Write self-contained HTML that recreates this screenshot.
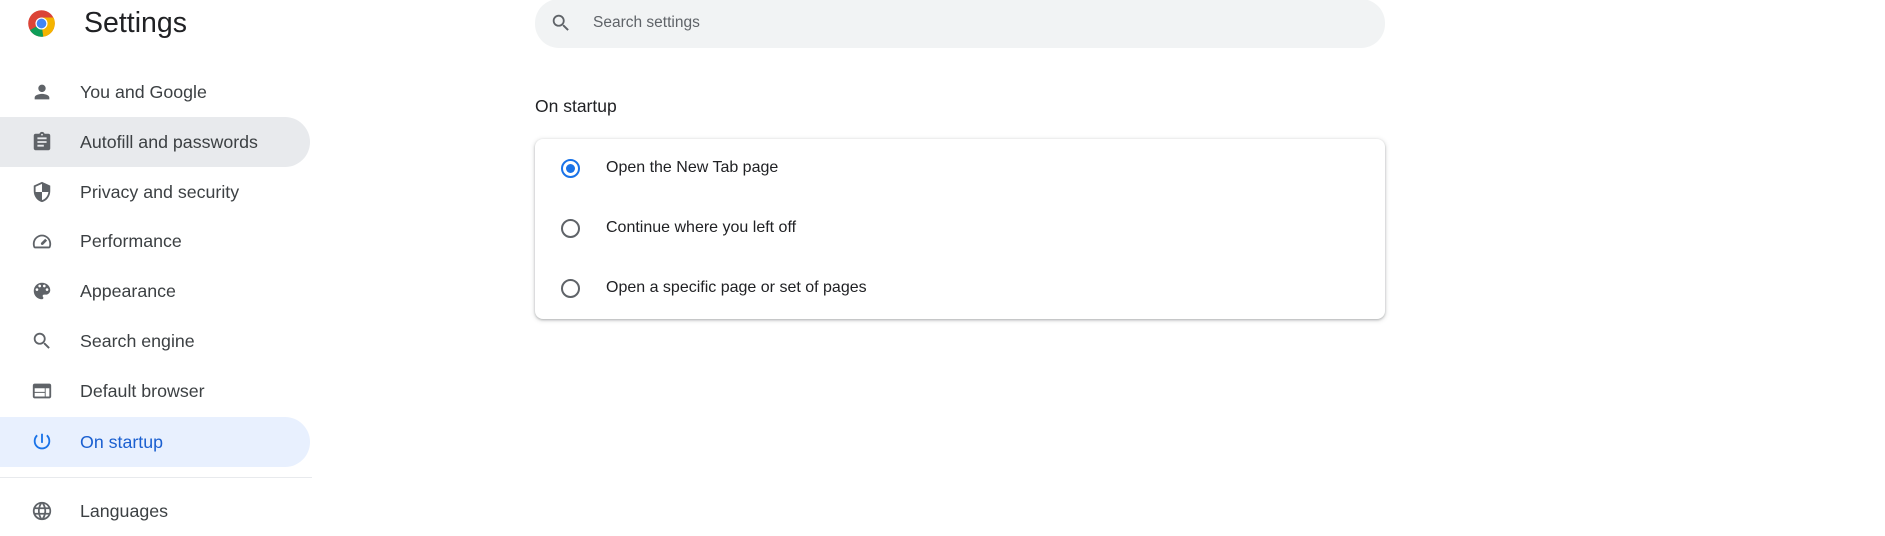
<!DOCTYPE html>
<html><head><meta charset="utf-8"><style>
*{margin:0;padding:0;box-sizing:border-box}
body{width:1885px;height:528px;background:#fff;font-family:"Liberation Sans",Arial,sans-serif;position:relative;overflow:hidden;color:#202124}
.abs{position:absolute}
.nav{position:absolute;left:0;width:310px;height:50px;border-radius:0 25px 25px 0;display:flex;align-items:center;font-size:17.8px;color:#3c4043}
.nav svg{position:absolute;left:31px;top:14px;width:22px;height:22px;fill:#5f6368}
.nav span{position:absolute;left:80px}
.sel{background:#e8eaed}
.act{background:#e8f0fe;color:#1a5fd0}
.act svg{fill:#1a73e8}
.radio{position:absolute;left:561px;width:19px;height:19px;border:2px solid #5f6368;border-radius:50%}
.rt{position:absolute;left:606px;font-size:16px;color:#202124}
</style></head><body>
<svg class="abs" style="left:27px;top:9px" width="29" height="29" viewBox="0 0 48 48">
<circle cx="24" cy="24" r="22" fill="#db4437"/>
<path d="M24 24 L5 35 A22 22 0 0 0 27 45.8Z" fill="#0f9d58"/>
<path d="M24 24 L27 45.8 A22 22 0 0 0 46 24 L24 24Z" fill="#f4b400"/>
<path d="M24 24 L46 24 A22 22 0 0 0 44 14 L24 14Z" fill="#f4b400"/>
<circle cx="24" cy="24" r="10" fill="#fff"/><circle cx="24" cy="24" r="8" fill="#4285f4"/>
</svg>
<div class="abs" style="left:84px;top:7px;font-size:28.5px;color:#202124">Settings</div>

<div class="nav" style="top:67px"><svg viewBox="0 0 24 24"><path d="M12 12c2.2 0 4-1.8 4-4s-1.8-4-4-4-4 1.8-4 4 1.8 4 4 4zm0 2c-2.7 0-8 1.3-8 4v2h16v-2c0-2.7-5.3-4-8-4z"/></svg><span>You and Google</span></div>
<div class="nav sel" style="top:117px"><svg viewBox="0 0 24 24"><path d="M19 3h-4.2C14.4 1.8 13.3 1 12 1s-2.4.8-2.8 2H5c-1.1 0-2 .9-2 2v14c0 1.1.9 2 2 2h14c1.100 0 2-.9 2-2V5c0-1.1-.9-2-2-2zm-7 0c.6 0 1 .4 1 1s-.4 1-1 1-1-.4-1-1 .4-1 1-1zm2 14H7v-2h7v2zm3-4H7v-2h10v2zm0-4H7V7h10v2z"/></svg><span>Autofill and passwords</span></div>
<div class="nav" style="top:167px"><svg viewBox="0 0 24 24"><path d="M12 1L3 5v6c0 5.6 3.8 10.7 9 12 5.2-1.3 9-6.4 9-12V5l-9-4zm0 11h7c-.5 4.1-3.3 7.8-7 8.9V12H5V6.3l7-3.1V12z"/></svg><span>Privacy and security</span></div>
<div class="nav" style="top:216px"><svg viewBox="0 0 24 24"><path d="M12 5C6.5 5 2 9.5 2 15c0 1.5.3 2.9.9 4.2.3.5.8.8 1.4.8h15.4c.6 0 1.1-.3 1.4-.8.6-1.3.9-2.7.9-4.2 0-5.5-4.5-10-10-10zm7.6 13H4.4C4.1 17.1 4 16.1 4 15c0-4.4 3.6-8 8-8s8 3.6 8 8c0 1.1-.1 2.1-.4 3zM15.5 9.5l-4.3 4.3c-.6.6-.6 1.5 0 2.1s1.5.6 2.1 0l4.3-4.3-2.1-2.1z"/></svg><span>Performance</span></div>
<div class="nav" style="top:266px"><svg viewBox="0 0 24 24"><path d="M12 3c-5 0-9 4-9 9s4 9 9 9c.8 0 1.5-.7 1.5-1.5 0-.4-.1-.7-.4-1-.2-.3-.4-.6-.4-1 0-.8.7-1.5 1.5-1.5H16c2.8 0 5-2.2 5-5 0-4.4-4-8-9-8zm-5.5 9c-.8 0-1.5-.7-1.5-1.5S5.7 9 6.5 9 8 9.7 8 10.5 7.3 12 6.5 12zm3-4C8.7 8 8 7.3 8 6.5S8.7 5 9.5 5s1.5.7 1.5 1.5S10.3 8 9.5 8zm5 0c-.8 0-1.5-.7-1.5-1.5S13.7 5 14.5 5s1.5.7 1.5 1.5S15.3 8 14.5 8zm3 4c-.8 0-1.5-.7-1.5-1.5S16.7 9 17.5 9s1.5.7 1.5 1.5-.7 1.5-1.5 1.5z"/></svg><span>Appearance</span></div>
<div class="nav" style="top:316px"><svg viewBox="0 0 24 24"><path d="M15.5 14h-.8l-.3-.3c1-1.1 1.6-2.6 1.6-4.2C16 5.9 13.1 3 9.5 3S3 5.9 3 9.5 5.9 16 9.5 16c1.6 0 3.1-.6 4.2-1.6l.3.3v.8l5 5 1.5-1.5-5-5zm-6 0C7 14 5 12 5 9.5S7 5 9.5 5 14 7 14 9.5 12 14 9.5 14z"/></svg><span>Search engine</span></div>
<div class="nav" style="top:366px"><svg viewBox="0 0 24 24"><path d="M20 4H4c-1.1 0-2 .9-2 2v12c0 1.1.9 2 2 2h16c1.1 0 2-.9 2-2V6c0-1.1-.9-2-2-2zm-5 14H4v-4h11v4zm0-5H4V9h11v4zm5 5h-4V9h4v9z"/></svg><span>Default browser</span></div>
<div class="nav act" style="top:417px"><svg viewBox="0 0 24 24"><path d="M11 3h2v10h-2zM16.6 5.4l1.4-1.4C20 5.8 21 8.3 21 11c0 5-4 9-9 9s-9-4-9-9c0-2.7 1.1-5.2 3-7l1.4 1.4C5.9 6.9 5 8.8 5 11c0 3.9 3.1 7 7 7s7-3.1 7-7c0-2.2-.9-4.1-2.4-5.6z"/></svg><span>On startup</span></div>
<div class="abs" style="left:0;top:477px;width:312px;height:1px;background:#e8eaed"></div>
<div class="nav" style="top:486px"><svg viewBox="0 0 24 24"><path d="M12 2C6.5 2 2 6.5 2 12s4.5 10 10 10 10-4.5 10-10S17.5 2 12 2zm6.9 6h-2.9c-.3-1.3-.8-2.5-1.4-3.6 1.8.6 3.4 1.900 4.3 3.6zM12 4c.8 1.2 1.5 2.5 1.9 4h-3.8c.4-1.4 1.1-2.8 1.9-4zM4.3 14C4.1 13.4 4 12.7 4 12s.1-1.4.3-2h3.4c-.1.7-.1 1.3-.1 2s.1 1.3.1 2H4.3zm.8 2h3c.3 1.3.8 2.5 1.4 3.6-1.8-.6-3.4-1.9-4.4-3.6zm3-8h-3c1-1.7 2.5-3 4.3-3.6C8.8 5.5 8.4 6.7 8.1 8zM12 20c-.8-1.2-1.5-2.5-1.9-4h3.8c-.4 1.4-1.1 2.8-1.9 4zm2.3-6H9.7c-.1-.7-.2-1.3-.2-2s.1-1.3.2-2h4.7c.1.7.2 1.300.2 2s-.1 1.3-.3 2zm.3 5.6c.6-1.1 1.1-2.3 1.4-3.600h3c-1 1.7-2.5 3-4.4 3.6zm1.8-5.6c.1-.7.1-1.3.1-2s-.1-1.3-.1-2h3.4c.2.6.3 1.3.3 2s-.1 1.4-.3 2h-3.4z"/></svg><span>Languages</span></div>

<div class="abs" style="left:535px;top:-1px;width:850px;height:49px;background:#f1f3f4;border-radius:24px"></div>
<svg class="abs" style="left:550px;top:12px" width="22" height="22" viewBox="0 0 24 24"><path fill="#5f6368" d="M15.5 14h-.8l-.3-.3c1-1.1 1.6-2.6 1.6-4.2C16 5.9 13.1 3 9.5 3S3 5.9 3 9.5 5.9 16 9.5 16c1.6 0 3.1-.6 4.2-1.6l.3.3v.8l5 5 1.5-1.5-5-5zm-6 0C7 14 5 12 5 9.5S7 5 9.5 5 14 7 14 9.5 12 14 9.5 14z"/></svg>
<div class="abs" style="left:593px;top:14px;font-size:15.5px;color:#5f6368">Search settings</div>

<div class="abs" style="left:535px;top:96px;font-size:17.5px;color:#202124">On startup</div>
<div class="abs" style="left:535px;top:139px;width:850px;height:180px;background:#fff;border-radius:8px;box-shadow:0 1px 2px rgba(60,64,67,.3),0 1px 4px 1px rgba(60,64,67,.15)"></div>
<div class="radio" style="top:159px;border-color:#1a73e8"><div style="position:absolute;left:3px;top:3px;width:9px;height:9px;border-radius:50%;background:#1a73e8"></div></div>
<div class="radio" style="top:219px"></div>
<div class="radio" style="top:279px"></div>
<div class="rt" style="top:159px">Open the New Tab page</div>
<div class="rt" style="top:219px">Continue where you left off</div>
<div class="rt" style="top:279px">Open a specific page or set of pages</div>
</body></html>
